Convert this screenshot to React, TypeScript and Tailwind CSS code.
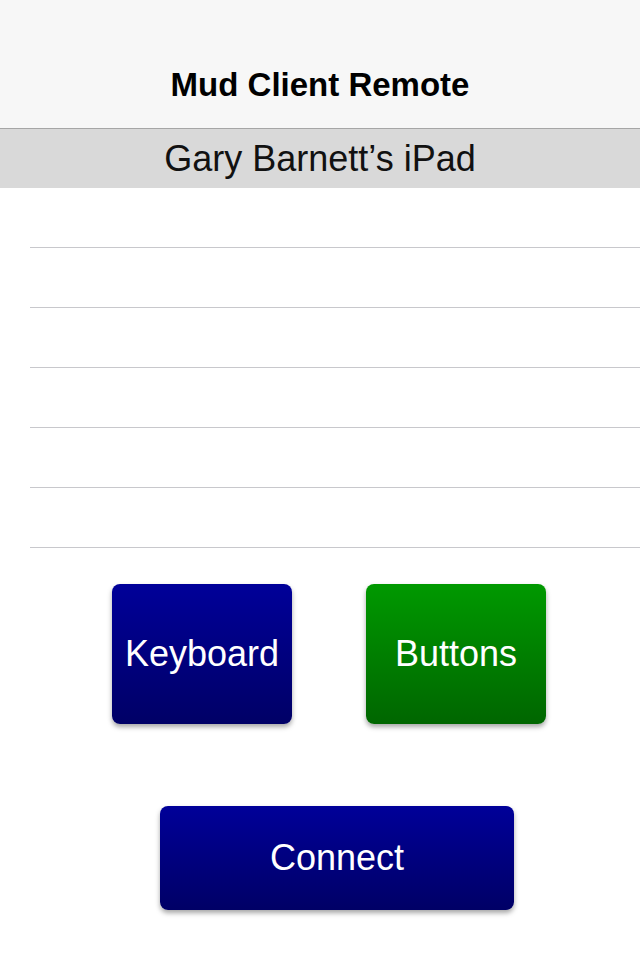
import * as React from "react";

const rows = [0, 1, 2, 3, 4, 5];

const btn =
  "flex items-center justify-center rounded-[8px] text-white text-[36px] shadow-[0_3px_5px_rgba(0,0,0,0.35)]";

export default function App() {
  return (
    <div className="flex h-[960px] w-[640px] flex-col bg-white font-['Liberation_Sans',Arial,sans-serif]">
      <div className="flex h-[129px] items-end justify-center border-b border-[#a6a6a6] bg-[#f7f7f7] pb-[27px]">
        <h1 className="text-[33px] font-bold leading-none text-black">Mud Client Remote</h1>
      </div>
      <div className="flex h-[59px] items-center justify-center bg-[#d9d9d9]">
        <span className="text-[36px] leading-none text-[#111]">Gary Barnett’s iPad</span>
      </div>
      <ul>
        {rows.map((r) => (
          <li key={r} className="ml-[30px] h-[60px] border-b border-[#c8c8cc]" />
        ))}
      </ul>
      <div className="mt-[36px] flex gap-[74px] pl-[112px]">
        <button className={`${btn} h-[140px] w-[180px] bg-gradient-to-b from-[#000099] to-[#000066]`}>
          Keyboard
        </button>
        <button className={`${btn} h-[140px] w-[180px] bg-gradient-to-b from-[#009900] to-[#006600]`}>
          Buttons
        </button>
      </div>
      <div className="mt-[82px] pl-[160px]">
        <button className={`${btn} h-[104px] w-[354px] bg-gradient-to-b from-[#000099] to-[#000066]`}>
          Connect
        </button>
      </div>
    </div>
  );
}
